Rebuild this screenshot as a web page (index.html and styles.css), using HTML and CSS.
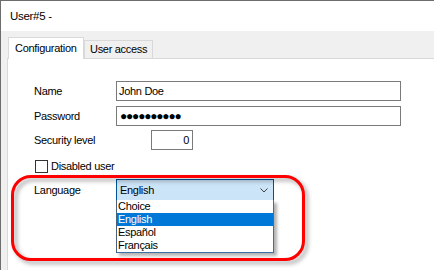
FILE: index.html
```html
<!DOCTYPE html>
<html>
<head>
<meta charset="utf-8">
<title>User#5</title>
<link rel="stylesheet" href="styles.css">
</head>
<body>
<div class="window">
  <div class="titlebar">User#5 -</div>
  <div class="client">
    <div class="tabs">
      <div class="tab active">Configuration</div>
      <div class="tab">User access</div>
    </div>
    <div class="panel">
      <div class="row first">
        <span class="label">Name</span>
        <span class="field wide">John Doe</span>
      </div>
      <div class="row gap5">
        <span class="label">Password</span>
        <span class="field wide dots">●●●●●●●●●●</span>
      </div>
      <div class="row gap4">
        <span class="label">Security level</span>
        <span class="field num">0</span>
      </div>
      <div class="check-row">
        <span class="check"></span>
        <span>Disabled user</span>
      </div>
      <div class="row lang">
        <span class="label">Language</span>
        <div class="combo">
          <span>English</span>
          <svg class="chevron" width="8" height="5" viewBox="0 0 8 5">
            <path d="M0.5 0.5 L4 4 L7.5 0.5" fill="none" stroke="#444" stroke-width="1"/>
          </svg>
          <ul class="list">
            <li>Choice</li>
            <li class="selected">English</li>
            <li>Español</li>
            <li>Français</li>
          </ul>
        </div>
      </div>
      <div class="highlight"></div>
    </div>
  </div>
</div>
</body>
</html>
```
FILE: styles.css
```css
body {
  margin: 0;
  font-family: "Liberation Sans", Arial, sans-serif;
  font-size: 11px;
  letter-spacing: -0.3px;
  color: #000;
}
.window {
  width: 434px;
  height: 270px;
  box-sizing: border-box;
  border-top: 1px solid #6d6d6d;
  border-left: 1px solid #6d6d6d;
  background: #f0f0f0;
  overflow: hidden;
}
.titlebar {
  height: 30px;
  line-height: 30px;
  padding-left: 9px;
  font-size: 11.5px;
  background: #fff;
}
.client {
  padding-left: 6px;
}
.tabs {
  display: flex;
  align-items: flex-end;
  height: 27px;
  padding-left: 1px;
}
.tab {
  box-sizing: border-box;
  border: 1px solid #d9d9d9;
  border-bottom: none;
  height: 18px;
  width: 69px;
  padding-left: 5px;
  line-height: 17px;
  background: #f0f0f0;
}
.tab.active {
  position: relative;
  z-index: 1;
  height: 22px;
  width: 76px;
  margin-bottom: -1px;
  padding: 1px 0 0 6px;
  line-height: 18px;
  background: #fff;
}
.panel {
  position: relative;
  height: 212px;
  border-top: 1px solid #d9d9d9;
  border-left: 1px solid #d9d9d9;
  background: #fff;
  padding-left: 26px;
}
.row {
  display: flex;
  align-items: center;
}
.row.first {
  padding-top: 22px;
}
.row.gap5 {
  margin-top: 5px;
}
.row.gap4 {
  margin-top: 4px;
}
.label {
  width: 82px;
  line-height: 20px;
}
.field {
  box-sizing: border-box;
  height: 20px;
  border: 1px solid #7a7a7a;
  padding-left: 2px;
  line-height: 18px;
  background: #fff;
}
.field.wide {
  width: 285px;
}
.field.dots {
  font-size: 12px;
  letter-spacing: -1.2px;
  padding-left: 3px;
}
.field.num {
  width: 42px;
  margin-left: 35px;
  text-align: right;
  padding-right: 3px;
}
.check-row {
  display: flex;
  align-items: center;
  gap: 3px;
  margin-top: 10px;
  margin-left: 1px;
  line-height: 13px;
}
.check {
  box-sizing: border-box;
  width: 13px;
  height: 13px;
  border: 1px solid #333;
  background: #fff;
}
.row.lang {
  margin-top: 6px;
  align-items: flex-start;
}
.row.lang .label {
  line-height: 22px;
}
.combo {
  position: relative;
  box-sizing: border-box;
  width: 158px;
  height: 22px;
  border: 1px solid #005499;
  background: #cce4f7;
  padding-left: 3px;
  line-height: 20px;
}
.chevron {
  position: absolute;
  right: 5px;
  top: 8px;
}
.list {
  position: absolute;
  z-index: 2;
  left: -1px;
  top: 20px;
  width: 158px;
  box-sizing: border-box;
  margin: 0;
  padding: 0;
  list-style: none;
  border: 1px solid #3c6fa8;
  border-left-color: #4a5f78;
  border-top: none;
  background: #fff;
  box-shadow: 3px 3px 3px rgba(0, 0, 0, 0.3);
}
.list li {
  height: 13px;
  line-height: 13px;
  padding-left: 1px;
}
.list li.selected {
  background: #0078d7;
  color: #fff;
}
.highlight {
  position: absolute;
  z-index: 3;
  left: 3px;
  top: 116px;
  width: 294px;
  height: 86px;
  box-sizing: border-box;
  border: 3px solid #ff0000;
  border-radius: 20px;
  filter: drop-shadow(3px 3px 2px rgba(0, 0, 0, 0.35));
}
```
